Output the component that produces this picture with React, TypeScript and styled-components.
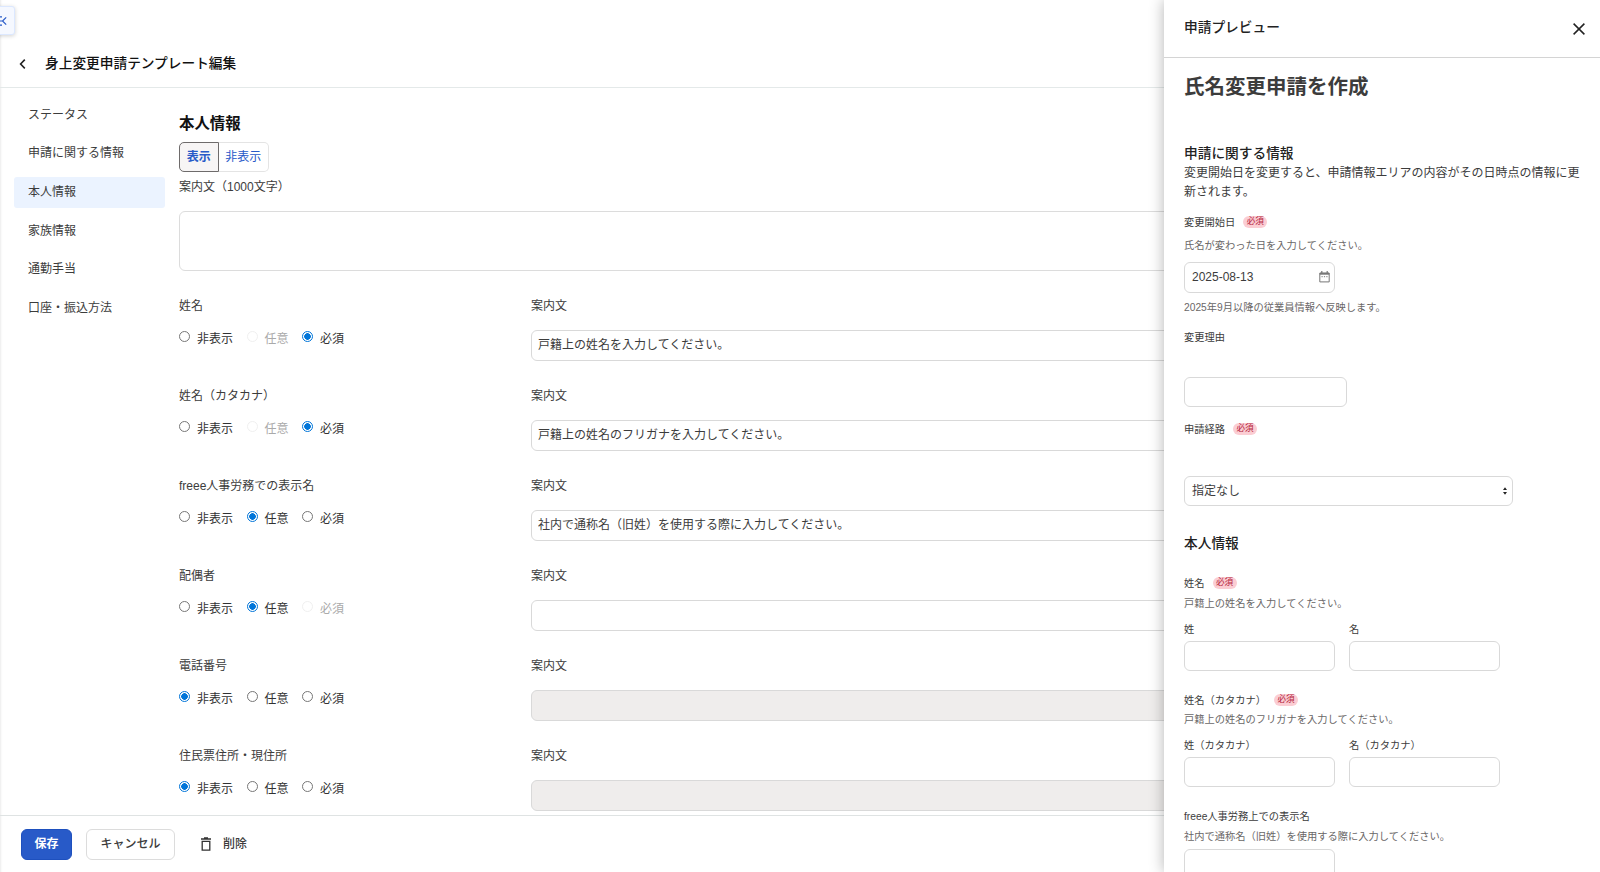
import React from 'react';
import styled, { createGlobalStyle, css } from 'styled-components';

const GlobalStyle = createGlobalStyle`
  *, *::before, *::after { box-sizing: border-box; }
  body {
    margin: 0;
    overflow: hidden;
    background: #fff;
    color: #3c3c3c;
    font-family: "Liberation Sans", "Noto Sans CJK JP", sans-serif;
    font-size: 12px;
    line-height: 16px;
  }
  h1, h2, h3, p { margin: 0; font-weight: inherit; font-size: inherit; }
  button, input, textarea { font: inherit; color: inherit; }
`;

const Page = styled.div`
  position: relative;
  display: flex;
  flex-direction: column;
  width: 1600px;
  height: 872px;
  overflow: hidden;
  box-shadow: inset 3px 0 2px -2px rgba(0, 0, 0, 0.08);
`;

const MenuToggle = styled.button`
  position: absolute;
  top: 6px;
  left: -16px;
  width: 31px;
  height: 29px;
  padding: 0 7px 0 0;
  display: flex;
  align-items: center;
  justify-content: flex-end;
  border: 1px solid #dce8ff;
  border-radius: 3px;
  background: #f5f8ff;
  color: #285ac8;
  box-shadow: 0 1px 4px rgba(0, 0, 0, 0.18);
`;

const PageHeader = styled.header`
  flex: none;
  height: 88px;
  padding: 54px 0 0 19px;
  display: flex;
  align-items: flex-start;
  gap: 19px;
  border-bottom: 1px solid #e4e9e9;
  line-height: 20px;
`;

const BackButton = styled.button`
  display: flex;
  width: 7px;
  height: 20px;
  padding: 0;
  align-items: center;
  border: 0;
  background: none;
`;

const PageTitle = styled.h1`
  && {
    font-size: 13.7px;
    font-weight: 500;
    color: #111;
  }
`;

const Body = styled.div`
  flex: 1;
  min-height: 0;
  display: flex;
  overflow: hidden;
`;

const SideNav = styled.nav`
  flex: none;
  width: 179px;
  padding: 11.5px 14px 0;
  display: flex;
  flex-direction: column;
  gap: 7.7px;
`;

const NavItem = styled.a<{ $active?: boolean }>`
  flex: none;
  height: 31px;
  padding: 0 14px;
  line-height: 31px;
  border-radius: 3px;
  background: ${(p) => (p.$active ? '#ebf3ff' : 'transparent')};
`;

const Content = styled.main`
  flex: 1;
  min-width: 0;
  padding-top: 26px;
`;

const SectionTitle = styled.h2`
  && {
    font-size: 15.4px;
    font-weight: 700;
    line-height: 20px;
    color: #111;
  }
`;

const Segments = styled.div`
  display: flex;
  margin-top: 8px;
  height: 30px;
`;

const Segment = styled.button<{ $selected?: boolean }>`
  height: 30px;
  padding: 0 6.75px;
  border: 1px solid #e4e4e4;
  background: #fff;
  color: #285ac8;
  ${(p) =>
    p.$selected
      ? css`
          border-color: #6e6b6b;
          border-radius: 5px 0 0 5px;
          background: #f7f5f5;
          font-weight: 700;
        `
      : css`
          border-left: 0;
          border-radius: 0 5px 5px 0;
        `}
`;

const GuideLabel = styled.p`
  margin-top: 7px;
`;

const TextArea = styled.textarea`
  display: block;
  width: 1380px;
  height: 60px;
  margin-top: 16px;
  padding: 7px;
  border: 1px solid #dcdcdc;
  border-radius: 6px;
  resize: none;
`;

const FieldList = styled.div`
  padding-top: 27px;
`;

const FieldRow = styled.div`
  display: grid;
  grid-template-columns: 352px 1028px;
  height: 90px;
  align-items: start;
`;

const FieldLabel = styled.p`
  height: 16px;
  line-height: 17px;
`;

const Choices = styled.div`
  display: flex;
  margin-top: 16px;
  height: 18px;
`;

const Choice = styled.label<{ $disabled?: boolean }>`
  display: flex;
  align-items: flex-start;
  gap: 7px;
  margin-right: 13.5px;
  line-height: 18px;
  color: ${(p) => (p.$disabled ? '#aaa' : '#323232')};
`;

const Radio = styled.input.attrs({ type: 'radio' })`
  appearance: none;
  width: 11px;
  height: 11px;
  margin: 1px 0 0;
  border: 1px solid #777;
  border-radius: 50%;
  background: #fff;
  &:checked {
    border-color: #0075d9;
    background: radial-gradient(circle, #0075d9 3px, #fff 3.6px);
  }
  &:disabled {
    border-color: #f0f0f0;
  }
`;

const TextInput = styled.input<{ $width?: number; $height?: number; $top?: number }>`
  display: block;
  width: ${(p) => (p.$width ? `${p.$width}px` : '100%')};
  height: ${(p) => p.$height ?? 31}px;
  margin: ${(p) => p.$top ?? 0}px 0 0;
  padding: 0 6px 5px;
  border: 1px solid #d9d9d9;
  border-radius: 6px;
  background: #fff;
  outline: 0;
  &:disabled {
    background: #efedec;
  }
`;

const Footer = styled.footer`
  flex: none;
  height: 57px;
  padding: 13px 21px 0;
  display: flex;
  align-items: flex-start;
  border-top: 1px solid #dfe3e3;
`;

const FooterButton = styled.button<{ $kind: 'primary' | 'outline' | 'plain' }>`
  height: 31px;
  padding: 0 0 1px;
  display: flex;
  align-items: center;
  justify-content: center;
  border: 1px solid transparent;
  border-radius: 6px;
  background: #fff;
  font-weight: 500;
  ${(p) =>
    p.$kind === 'primary' &&
    css`
      width: 51px;
      background: #285ac8;
      border-color: #1e50be;
      color: #fff;
      font-weight: 700;
    `}
  ${(p) =>
    p.$kind === 'outline' &&
    css`
      width: 89px;
      margin-left: 14px;
      border-color: #dcdcdc;
    `}
  ${(p) =>
    p.$kind === 'plain' &&
    css`
      margin-left: 24px;
      gap: 11px;
    `}
`;

const Panel = styled.aside`
  position: absolute;
  top: 0;
  right: 0;
  width: 436px;
  height: 872px;
  overflow: hidden;
  background: #fff;
  box-shadow: 0 0 14px rgba(0, 0, 0, 0.3);
`;

const PanelHeader = styled.header`
  height: 58px;
  padding: 0 15px 1px 20px;
  display: flex;
  align-items: center;
  justify-content: space-between;
  border-bottom: 1px solid #d4d4d4;
`;

const PanelTitle = styled.h2`
  && {
    font-size: 13.7px;
    font-weight: 500;
    color: #222;
  }
`;

const CloseButton = styled.button`
  display: flex;
  padding: 0;
  margin-top: 1px;
  border: 0;
  background: none;
`;

const PanelBody = styled.div`
  padding: 14px 16px 0 20px;
`;

const PreviewTitle = styled.h1`
  && {
    font-size: 20.5px;
    font-weight: 700;
    line-height: 30px;
  }
`;

const PreviewHeading = styled.h3<{ $top: number }>`
  && {
    margin-top: ${(p) => p.$top}px;
    font-size: 13.7px;
    font-weight: 500;
    line-height: 18px;
    color: #222;
  }
`;

const Lead = styled.p`
  padding: 1px 0 0;
  line-height: 18.5px;
`;

const SmallLabel = styled.div<{ $top: number }>`
  display: flex;
  height: 16px;
  margin-top: ${(p) => p.$top}px;
  font-size: 10.25px;
  white-space: nowrap;
`;

const Note = styled(SmallLabel)`
  color: #6a6767;
`;

const Badge = styled.span`
  height: 12px;
  width: 24px;
  margin: 1px 0 0 8px;
  border-radius: 6px;
  background: #fbcdd3;
  color: #b4233c;
  font-size: 8.6px;
  line-height: 11px;
  text-align: center;
`;

const DateField = styled.div`
  display: flex;
  align-items: center;
  justify-content: space-between;
  width: 151px;
  height: 31px;
  margin-top: 8px;
  padding: 0 4px 2px 7px;
  border: 1px solid #d9d9d9;
  border-radius: 6px;
`;

const SelectField = styled.div`
  display: flex;
  align-items: center;
  justify-content: space-between;
  width: 329px;
  height: 30px;
  margin-top: 38px;
  padding: 0 5px 1px 7px;
  border: 1px solid #d9d9d9;
  border-radius: 6px;
`;

const Pair = styled.div`
  display: flex;
  gap: 14px;
`;

const PairField = styled.div`
  width: 151px;
`;

const MenuIcon = () => (
  <svg width="14" height="10" viewBox="0 0 14 10" fill="none" stroke="currentColor" strokeWidth="1.2">
    <path d="M0 .8h9M0 5h9M0 9.2h9M13.2 1.3 9.5 5l3.7 3.7" />
  </svg>
);

const BackIcon = () => (
  <svg width="7" height="10" viewBox="0 0 7 10" fill="none" stroke="#222" strokeWidth="1.6">
    <path d="M5.8.6 1.6 5l4.2 4.4" />
  </svg>
);

const CloseIcon = () => (
  <svg width="12" height="12" viewBox="0 0 12 12" fill="none" stroke="#222" strokeWidth="1.5">
    <path d="M.6.6l10.8 10.8M11.4.6.6 11.4" />
  </svg>
);

const TrashIcon = () => (
  <svg width="12" height="15" viewBox="0 0 12 15" fill="none" stroke="#323232" strokeWidth="1.3">
    <path d="M1 2h10M4 .9h4M2.2 4.3v8.9h7.6V4.3z" />
  </svg>
);

const CalendarIcon = () => (
  <svg width="11" height="12" viewBox="0 0 11 12" fill="none" stroke="#777">
    <path d="M.8 2h9.4v8.9H.8z" />
    <path d="M.8 2.8h9.4" strokeWidth="1.8" />
    <path d="M2.8 0v2M8.2 0v2" strokeWidth="1.2" />
    <path d="M2.5 5.7h6" strokeDasharray="1.2 1.2" />
  </svg>
);

const ArrowsIcon = () => (
  <svg width="4" height="8" viewBox="0 0 4 8" fill="#222">
    <path d="M0 3 2 .3 4 3zM0 5l2 2.7L4 5z" />
  </svg>
);

const navItems = ['ステータス', '申請に関する情報', '本人情報', '家族情報', '通勤手当', '口座・振込方法'];
const options = ['非表示', '任意', '必須'];

interface Field {
  label: string;
  selected: number;
  disabled?: number;
  guide?: string;
}

const fields: Field[] = [
  { label: '姓名', selected: 2, disabled: 1, guide: '戸籍上の姓名を入力してください。' },
  { label: '姓名（カタカナ）', selected: 2, disabled: 1, guide: '戸籍上の姓名のフリガナを入力してください。' },
  { label: 'freee人事労務での表示名', selected: 1, guide: '社内で通称名（旧姓）を使用する際に入力してください。' },
  { label: '配偶者', selected: 1, disabled: 2 },
  { label: '電話番号', selected: 0 },
  { label: '住民票住所・現住所', selected: 0 },
];

const NamePair = ({ labels, top }: { labels: string[]; top: number }) => (
  <Pair>
    {labels.map((label) => (
      <PairField key={label}>
        <SmallLabel $top={top}>{label}</SmallLabel>
        <TextInput $height={30} $top={3} />
      </PairField>
    ))}
  </Pair>
);

export default function App() {
  return (
    <>
      <GlobalStyle />
      <Page>
        <MenuToggle aria-label="メニュー">
          <MenuIcon />
        </MenuToggle>
        <PageHeader>
          <BackButton aria-label="戻る">
            <BackIcon />
          </BackButton>
          <PageTitle>身上変更申請テンプレート編集</PageTitle>
        </PageHeader>
        <Body>
          <SideNav>
            {navItems.map((item) => (
              <NavItem key={item} $active={item === '本人情報'}>
                {item}
              </NavItem>
            ))}
          </SideNav>
          <Content>
            <SectionTitle>本人情報</SectionTitle>
            <Segments>
              <Segment $selected>表示</Segment>
              <Segment>非表示</Segment>
            </Segments>
            <GuideLabel>案内文（1000文字）</GuideLabel>
            <TextArea />
            <FieldList>
              {fields.map((field) => (
                <FieldRow key={field.label}>
                  <div>
                    <FieldLabel>{field.label}</FieldLabel>
                    <Choices>
                      {options.map((option, i) => (
                        <Choice key={option} $disabled={field.disabled === i}>
                          <Radio
                            name={field.label}
                            defaultChecked={field.selected === i}
                            disabled={field.disabled === i}
                          />
                          {option}
                        </Choice>
                      ))}
                    </Choices>
                  </div>
                  <div>
                    <FieldLabel>案内文</FieldLabel>
                    <TextInput $top={16} defaultValue={field.guide} disabled={field.selected === 0} />
                  </div>
                </FieldRow>
              ))}
            </FieldList>
          </Content>
        </Body>
        <Footer>
          <FooterButton $kind="primary">保存</FooterButton>
          <FooterButton $kind="outline">キャンセル</FooterButton>
          <FooterButton $kind="plain">
            <TrashIcon />
            削除
          </FooterButton>
        </Footer>
        <Panel>
          <PanelHeader>
            <PanelTitle>申請プレビュー</PanelTitle>
            <CloseButton aria-label="閉じる">
              <CloseIcon />
            </CloseButton>
          </PanelHeader>
          <PanelBody>
            <PreviewTitle>氏名変更申請を作成</PreviewTitle>
            <PreviewHeading $top={43}>申請に関する情報</PreviewHeading>
            <Lead>変更開始日を変更すると、申請情報エリアの内容がその日時点の情報に更新されます。</Lead>
            <SmallLabel $top={14}>
              変更開始日<Badge>必須</Badge>
            </SmallLabel>
            <Note $top={7}>氏名が変わった日を入力してください。</Note>
            <DateField>
              2025-08-13
              <CalendarIcon />
            </DateField>
            <Note $top={7}>2025年9月以降の従業員情報へ反映します。</Note>
            <SmallLabel $top={14}>変更理由</SmallLabel>
            <TextInput $width={163} $height={30} $top={31} />
            <SmallLabel $top={15}>
              申請経路<Badge>必須</Badge>
            </SmallLabel>
            <SelectField>
              指定なし
              <ArrowsIcon />
            </SelectField>
            <PreviewHeading $top={29}>本人情報</PreviewHeading>
            <SmallLabel $top={23}>
              姓名<Badge>必須</Badge>
            </SmallLabel>
            <Note $top={4}>戸籍上の姓名を入力してください。</Note>
            <NamePair labels={['姓', '名']} top={10} />
            <SmallLabel $top={22}>
              姓名（カタカナ）<Badge>必須</Badge>
            </SmallLabel>
            <Note $top={3}>戸籍上の姓名のフリガナを入力してください。</Note>
            <NamePair labels={['姓（カタカナ）', '名（カタカナ）']} top={10} />
            <SmallLabel $top={22}>freee人事労務上での表示名</SmallLabel>
            <Note $top={4}>社内で通称名（旧姓）を使用する際に入力してください。</Note>
            <TextInput $width={151} $height={30} $top={4} />
          </PanelBody>
        </Panel>
      </Page>
    </>
  );
}
